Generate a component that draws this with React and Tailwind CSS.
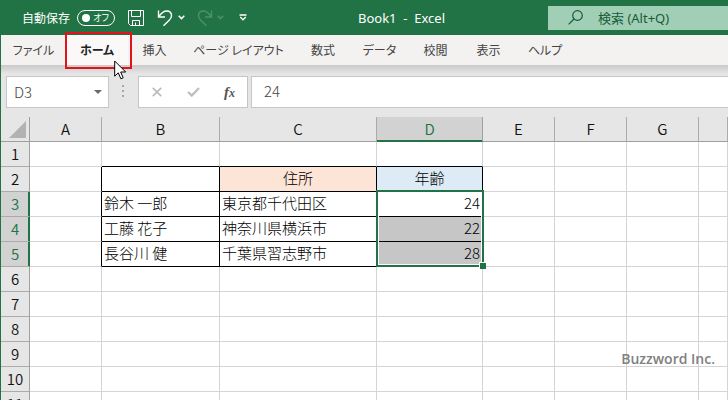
import React from "react";

const tabs = [
  { name: "ファイル", width: "w-[65px]" },
  { name: "ホーム", width: "w-[62px]", active: true },
  { name: "挿入", width: "w-[53px]" },
  { name: "ページ レイアウト", width: "w-[115px]" },
  { name: "数式", width: "w-[54px]" },
  { name: "データ", width: "w-[59px]" },
  { name: "校閲", width: "w-[53px]" },
  { name: "表示", width: "w-[53px]" },
  { name: "ヘルプ", width: "w-[60px]" },
];

const columns = [
  { name: "A", width: "w-[72px]" },
  { name: "B", width: "w-[118px]" },
  { name: "C", width: "w-[157px]" },
  { name: "D", width: "w-[106px]" },
  { name: "E", width: "w-[72px]" },
  { name: "F", width: "w-[72px]" },
  { name: "G", width: "w-[72px]" },
  { name: "", width: "" },
];

const rows = Array.from({ length: 11 }, (_, i) => i + 1);

const values = {
  C2: "住所",
  D2: "年齢",
  B3: "鈴木 一郎",
  C3: "東京都千代田区",
  D3: "24",
  B4: "工藤 花子",
  C4: "神奈川県横浜市",
  D4: "22",
  B5: "長谷川 健",
  C5: "千葉県習志野市",
  D5: "28",
};

const fills = {
  C2: "bg-[#fce4d6]",
  D2: "bg-[#ddebf7]",
  D4: "bg-[#c6c6c6]",
  D5: "bg-[#c6c6c6]",
};

function borderClasses(col, row) {
  const inTable = "BCD".includes(col) && col !== "";
  const right = "ABCD".includes(col) && col !== "" && row >= 2 && row <= 5;
  const bottom = inTable && row >= 1 && row <= 5;
  return (
    (right ? "border-r-black " : "border-r-[#d4d4d4] ") +
    (bottom ? "border-b-black" : "border-b-[#d4d4d4]")
  );
}

function Chevron({ className = "" }) {
  return (
    <svg viewBox="0 0 7 5" className={"h-[5px] w-[7px] " + className} fill="none" stroke="currentColor" strokeWidth="1.5">
      <path d="M.7.8 3.5 3.6 6.3.8" />
    </svg>
  );
}

function TitleBar() {
  return (
    <header className="flex h-[35px] shrink-0 items-center bg-[#217346] text-white">
      <div className="flex items-center pl-[22px]">
        <label htmlFor="autosave" className="text-[12px] leading-4">自動保存</label>
        <span className="relative ml-[7px] flex h-4 w-[38px] items-center justify-end rounded-full border border-white pr-[5px]">
          <input
            id="autosave"
            type="checkbox"
            className="absolute top-[3px] left-1 size-2 cursor-pointer appearance-none rounded-full bg-white"
          />
          <span className="text-[9px] leading-3 [font-feature-settings:'palt']">オフ</span>
        </span>
        <button type="button" aria-label="上書き保存" className="ml-[13px]">
          <svg viewBox="0 0 16 16" className="size-4" fill="none" stroke="currentColor">
            <path d="M.5.5h15v15h-13l-2-2zM3.5.5v6h9v-6M4.5 15.500v-5h7v5M7.500 12.500v3" />
          </svg>
        </button>
        <button type="button" aria-label="元に戻す" className="ml-[13px]">
          <svg viewBox="0 0 16 18" className="h-[18px] w-4" fill="none" stroke="currentColor" strokeWidth="1.4">
            <path d="M1.500 1.500v6.500h6.500M1.800 7.600C4.500 3.800 7 2 9.700 2c3 0 4.800 2.100 4.800 4.800 0 1.900-.9 3-2.300 4.400L6.500 16.800" />
          </svg>
        </button>
        <button type="button" aria-label="元に戻す履歴" className="ml-[5px]">
          <Chevron />
        </button>
        <button type="button" aria-label="やり直し" disabled className="ml-3 text-[#4f9069]">
          <svg viewBox="0 0 16 18" className="h-[18px] w-4" fill="none" stroke="currentColor" strokeWidth="1.4">
            <path d="M14.500 1.500v6.500H8M14.200 7.600C11.500 3.800 9 2 6.300 2 3.300 2 1.500 4.100 1.500 6.800c0 1.900.9 3 2.300 4.400l5.700 5.600" />
          </svg>
        </button>
        <button type="button" aria-label="やり直し履歴" disabled className="ml-1 text-[#4f9069]">
          <Chevron />
        </button>
        <button type="button" aria-label="ツール バーのカスタマイズ" className="ml-[15px]">
          <svg viewBox="0 0 8 7" className="h-[7px] w-2" fill="none" stroke="currentColor" strokeWidth="1.3">
            <path d="M.5 1h7M1.200 3 4 5.800 6.800 3" />
          </svg>
        </button>
      </div>
      <h1 className="flex-1 pl-2 text-center font-['Noto_Sans','Noto_Sans_CJK_JP',sans-serif] text-[13px] leading-4 whitespace-pre">
        {"Book1  -  Excel"}
      </h1>
      <div className="flex h-6 w-[180px] shrink-0 items-center bg-[#a0cfb5] pl-5 text-[#185c37]">
        <svg viewBox="0 0 15 15" className="size-[15px] shrink-0" fill="none" stroke="currentColor" strokeWidth="1.2">
          <circle cx="9.500" cy="5.500" r="4.800" />
          <path d="M6 9 .6 14.400" />
        </svg>
        <input
          type="search"
          aria-label="検索"
          placeholder="検索 (Alt+Q)"
          className="ml-[15px] w-full min-w-0 bg-transparent font-['Noto_Sans','Noto_Sans_CJK_JP',sans-serif] text-[13px] leading-4 outline-none placeholder:text-[#185c37]"
        />
      </div>
    </header>
  );
}

function Ribbon() {
  return (
    <nav className="flex h-[30px] shrink-0 bg-[#f3f2f1] text-[12px] text-[#444]">
      {tabs.map((tab) => (
        <div key={tab.name} className={"relative shrink-0 " + tab.width}>
          <button
            type="button"
            className={
              "h-full w-full text-center leading-4 whitespace-nowrap [font-feature-settings:'palt'] " +
              (tab.active ? "bg-[#faf9f8] font-bold text-[#222]" : "")
            }
          >
            {tab.name}
          </button>
          {tab.active && (
            <>
              <span className="pointer-events-none absolute -top-[3px] -left-px z-10 h-[37px] w-[67px] border-2 border-[#e0141a]" />
              <svg viewBox="0 0 13 20" className="pointer-events-none absolute top-[25px] left-12 z-20 h-5 w-[13px]" fill="white" stroke="black">
                <path d="M.7 1v15.200l3.600-3.400 2.600 6 2.300-1-2.500-5.800h5z" />
              </svg>
            </>
          )}
        </div>
      ))}
    </nav>
  );
}

function FormulaBar() {
  return (
    <div className="flex h-[52px] shrink-0 items-start bg-linear-to-b from-[#cbcac9] to-[#e6e6e6] to-[9px] pt-[11px] pl-[5px] text-[#444]">
      <div className="flex h-8 w-[103px] shrink-0 items-center border border-[#c6c6c6] bg-white">
        <input
          aria-label="名前ボックス"
          defaultValue="D3"
          className="min-w-0 flex-1 pl-[7px] text-[15px] leading-5 font-light outline-none"
        />
        <button type="button" aria-label="名前の一覧" className="mr-[6px]">
          <svg viewBox="0 0 8 4" className="h-1 w-2" fill="#6a6a6a">
            <path d="M0 0h8L4 4z" />
          </svg>
        </button>
      </div>
      <svg viewBox="0 0 2 12" className="mt-[9px] ml-[13px] h-3 w-[2px] shrink-0" fill="#a6a6a6">
        <path d="M0 0h2v2H0zM0 5h2v2H0zM0 10h2v2H0z" />
      </svg>
      <div className="ml-[14px] flex h-8 w-[110px] shrink-0 items-center border border-[#c6c6c6] bg-white">
        <button type="button" aria-label="キャンセル" className="ml-[13px] text-[#bdbdbd]">
          <svg viewBox="0 0 10 10" className="size-[10px]" fill="none" stroke="currentColor" strokeWidth="1.8">
            <path d="m.8.8 8.400 8.400M9.200.8.8 9.200" />
          </svg>
        </button>
        <button type="button" aria-label="入力" className="ml-[25px] text-[#bdbdbd]">
          <svg viewBox="0 0 13 10" className="h-[10px] w-[13px]" fill="none" stroke="currentColor" strokeWidth="2.200">
            <path d="m1 5 3.800 3.600L12 1" />
          </svg>
        </button>
        <button
          type="button"
          aria-label="関数の挿入"
          className="ml-6 font-['Liberation_Serif',serif] text-[15px] leading-5 font-bold text-[#555] italic"
        >
          f<span className="text-[12px]">x</span>
        </button>
      </div>
      <div className="ml-[3px] flex h-8 min-w-0 flex-1 items-center border-y border-l border-[#c6c6c6] bg-white">
        <input
          aria-label="数式バー"
          defaultValue="24"
          className="w-full pb-[2px] pl-3 text-[15px] leading-5 font-light outline-none"
        />
      </div>
    </div>
  );
}

function Selection() {
  return (
    <span className="pointer-events-none absolute -top-[2px] -left-px z-10 h-[77px] w-[108px] border-2 border-[#217346] shadow-[inset_0_0_0_1px_white]">
      <span className="absolute -right-1 -bottom-1 size-[7px] border-t border-l border-white bg-[#217346]" />
    </span>
  );
}

function Sheet() {
  return (
    <main className="min-h-0 flex-1 overflow-hidden">
      <table className="w-full table-fixed border-separate border-spacing-0 text-[15px] leading-5">
        <colgroup>
          <col className="w-[29px]" />
          {columns.map((c) => (
            <col key={c.name} className={c.width} />
          ))}
        </colgroup>
        <thead>
          <tr className="h-[25px] bg-[#e6e6e6]">
            <td className="border-r border-b border-[#9f9f9f] p-0">
              <button type="button" aria-label="すべて選択" className="ml-2 block">
                <svg viewBox="0 0 17 17" className="size-[17px]" fill="#b2b2b2">
                  <path d="M17 0v17H0z" />
                </svg>
              </button>
            </td>
            {columns.map((c) => (
              <th
                key={c.name}
                scope="col"
                className={
                  "border-r border-b p-0 font-[350] " +
                  (c.name === "D"
                    ? "border-r-[#9f9f9f] border-b-[#217346] bg-[#d2d2d2] text-[#217346] shadow-[inset_0_-1px_0_#217346]"
                    : "border-r-[#ababab] border-b-[#9f9f9f] text-[#111]")
                }
              >
                {c.name}
              </th>
            ))}
          </tr>
        </thead>
        <tbody>
          {rows.map((r) => {
            const active = r >= 3 && r <= 5;
            return (
              <tr key={r} className="h-[25px]">
                <th
                  scope="row"
                  className={
                    "border-r border-b border-b-[#ababab] p-0 font-[350] " +
                    (active
                      ? "border-r-[#217346] bg-[#d2d2d2] text-[#217346] shadow-[inset_-1px_0_0_#217346]"
                      : "border-r-[#9f9f9f] bg-[#e6e6e6] text-[#111]")
                  }
                >
                  {r}
                </th>
                {columns.map((c) => {
                  const id = c.name + r;
                  const align = r === 2 ? "text-center" : c.name === "D" ? "text-right" : "text-left";
                  return (
                    <td
                      key={id}
                      className={
                        "relative border-r border-b px-[2px] pt-0 pb-[2px] font-light whitespace-nowrap text-black " +
                        align + " " + borderClasses(c.name, r) + " " + (fills[id] || "bg-white")
                      }
                    >
                      {values[id]}
                      {id === "D3" && <Selection />}
                    </td>
                  );
                })}
              </tr>
            );
          })}
        </tbody>
      </table>
    </main>
  );
}

export default function App() {
  return (
    <div className="relative flex h-screen flex-col overflow-hidden bg-white font-['Noto_Sans_CJK_JP',sans-serif]">
      <TitleBar />
      <div className="flex min-h-0 flex-1 flex-col border-l border-[#217346]">
        <Ribbon />
        <FormulaBar />
        <Sheet />
      </div>
      <p className="pointer-events-none absolute right-[13px] bottom-[33px] font-['Open_Sans',sans-serif] text-[14px] leading-4 font-semibold text-[#808080]">
        Buzzword Inc.
      </p>
    </div>
  );
}
